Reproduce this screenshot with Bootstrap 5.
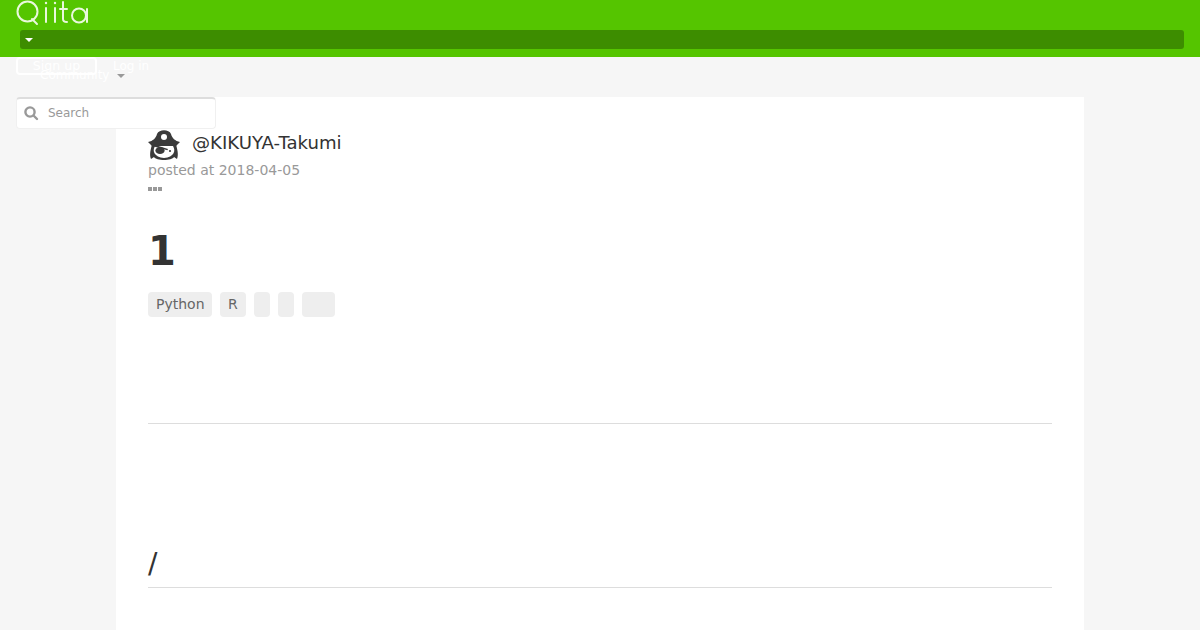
<!DOCTYPE html>
<html lang="en">
<head>
  <meta charset="UTF-8">
  <meta name="viewport" content="width=device-width, initial-scale=1">
  <title>Qiita - @KIKUYA-Takumi</title>
  <link href="https://cdn.jsdelivr.net/npm/bootstrap@5.3.0/dist/css/bootstrap.min.css" rel="stylesheet">
  <style>
    html, body {
      height: 630px;
      overflow: hidden;
    }
    body {
      font-family: "DejaVu Sans", sans-serif;
      background: #f6f6f6;
      color: #333;
      position: relative;
    }
    .qiita-head {
      background: #55c500;
      height: 57px;
      padding: 0 16px 0 20px;
    }
    .qiita-logo {
      display: block;
      margin-left: -4px;
      height: 30px;
    }
    .nav-dark-bar {
      background: #3d8d00;
      height: 19px;
      border-radius: 3px;
      padding-left: 5px;
    }
    .caret-down {
      width: 0;
      height: 0;
      border-left: 4px solid transparent;
      border-right: 4px solid transparent;
      border-top: 4px solid #fff;
    }
    .spill-signup {
      position: absolute;
      left: 16px;
      top: 57px;
      width: 81px;
      height: 18px;
      border: 2px solid #fff;
      border-radius: 4px;
      color: #fff;
      font-size: 12.6px;
      line-height: 14px;
      text-align: center;
    }
    .spill-login {
      position: absolute;
      left: 113px;
      top: 57px;
      color: #fff;
      font-size: 12px;
      line-height: 18px;
    }
    .spill-community {
      position: absolute;
      left: 40px;
      top: 66px;
      color: #fff;
      font-size: 12px;
      line-height: 18px;
    }
    .spill-caret {
      position: absolute;
      left: 117px;
      top: 74px;
      border-top-color: #999;
    }
    .search-box {
      position: absolute;
      left: 16px;
      top: 97px;
      width: 200px;
      height: 32px;
      background: #fff;
      border: 1px solid #f0f0f0;
      border-top: 2px solid #ddd;
      border-radius: 4px;
      z-index: 2;
      color: #999;
      font-size: 12px;
      padding: 0 0 2px 6px;
      gap: 9px;
    }
    .article-wrap {
      width: 968px;
      margin: 40px auto 0;
      background: #fff;
      padding: 32px;
      height: 533px;
    }
    .author-name {
      font-size: 18.1px;
      line-height: 28px;
      padding-bottom: 4px;
      color: #333;
    }
    .posted-at {
      font-size: 14px;
      color: #999;
      line-height: 22px;
      margin-top: -2px;
    }
    .dots-row {
      height: 5px;
      margin-top: 6px;
    }
    .dots-row i {
      display: block;
      width: 4px;
      height: 4px;
      background: #999;
      margin-right: 1px;
    }
    .article-title {
      font-size: 40px;
      font-weight: 700;
      line-height: 48px;
      margin: 35px 0 0;
      color: #333;
    }
    .tag-row {
      margin-top: 17px;
    }
    .tag-chip {
      display: block;
      height: 25px;
      background: #eee;
      border-radius: 4px;
      padding: 0 8px;
      font-size: 14px;
      line-height: 25px;
      color: #666;
    }
    .tag-first {
      width: 64px;
      white-space: nowrap;
    }
    .tag-wide {
      width: 33px;
    }
    .tag-narrow {
      width: 16px;
    }
    .rule-one {
      border-top: 1px solid #ddd;
      margin-top: 106px;
    }
    .section-title {
      font-size: 28px;
      line-height: 34px;
      margin: 123px 0 0;
      font-weight: 400;
      color: #333;
      padding-bottom: 6px;
      border-bottom: 1px solid #ddd;
    }
  </style>
</head>
<body>
  <!-- Header -->
  <header class="qiita-head">
    <svg class="qiita-logo" width="76" height="30" viewBox="0 0 76 30" role="img" aria-label="Qiita logo" fill="none" stroke="#e9f8dc" stroke-width="2" stroke-linecap="round">
      <circle cx="11.5" cy="11.5" r="10"/>
      <line x1="16" y1="19" x2="21" y2="24"/>
      <line x1="30" y1="8" x2="30" y2="22"/>
      <circle cx="30" cy="3" r="1.2" fill="#e9f8dc" stroke="none"/>
      <line x1="39" y1="8" x2="39" y2="22"/>
      <circle cx="39" cy="3" r="1.2" fill="#e9f8dc" stroke="none"/>
      <path d="M47 2 V19 Q47 22 51 22"/>
      <line x1="44" y1="9" x2="51" y2="9"/>
      <circle cx="63" cy="15.5" r="7"/>
      <line x1="71" y1="9" x2="71" y2="22"/>
    </svg>
    <div class="nav-dark-bar d-flex align-items-center">
      <span class="caret-down"></span>
    </div>
  </header>

  <!-- Nav items that spill out of the collapsed bar -->
  <a class="spill-signup text-decoration-none">Sign up</a>
  <a class="spill-login text-decoration-none">Log in</a>
  <span class="spill-community">Community</span>
  <span class="caret-down spill-caret"></span>

  <div class="search-box d-flex align-items-center">
    <svg width="16" height="16" viewBox="0 0 16 16" fill="none" stroke="#999" stroke-width="2.4" stroke-linecap="round">
      <circle cx="7" cy="7" r="4.6"/>
      <line x1="11" y1="11" x2="14" y2="14"/>
    </svg>
    <span>Search</span>
  </div>

  <!-- Article -->
  <main class="article-wrap">
    <div class="d-flex align-items-center gap-2">
      <svg class="me-1" width="32" height="32" viewBox="0 0 32 32">
        <path d="M0 13 C5 12 8 9 9 5 C11 0 21 0 23 5 C24 9 27 12 32 13 L28 17 L4 17 Z" fill="#3a3a3a"/>
        <circle cx="16" cy="8" r="3" fill="#fff"/>
        <path d="M4 15 H28 C29 20 31 25 29 30 L26 28 C24 32 8 32 6 28 L3 30 C1 25 3 20 4 15 Z" fill="#3a3a3a"/>
        <path d="M7 17 H25 C28 22 26 28 16 29 C6 28 4 22 7 17 Z" fill="#fff"/>
        <path d="M4 15 L20 20 L19.4 21.2 L4 17 Z" fill="#3a3a3a"/>
        <ellipse cx="12" cy="21.5" rx="4.6" ry="3.6" fill="#3a3a3a"/>
        <circle cx="22" cy="22" r="1.1" fill="#3a3a3a"/>
      </svg>
      <span class="author-name">@KIKUYA-Takumi</span>
    </div>
    <div class="posted-at">posted at 2018-04-05</div>
    <div class="dots-row d-flex"><i></i><i></i><i></i></div>

    <h1 class="article-title">1</h1>

    <div class="tag-row d-flex gap-2">
      <span class="tag-chip tag-first">Python</span>
      <span class="tag-chip">R</span>
      <span class="tag-chip tag-narrow"></span>
      <span class="tag-chip tag-narrow"></span>
      <span class="tag-chip tag-wide"></span>
    </div>

    <div class="rule-one"></div>

    <h2 class="section-title">/</h2>
  </main>

  <script src="https://cdn.jsdelivr.net/npm/bootstrap@5.3.0/dist/js/bootstrap.bundle.min.js"></script>
</body>
</html>
